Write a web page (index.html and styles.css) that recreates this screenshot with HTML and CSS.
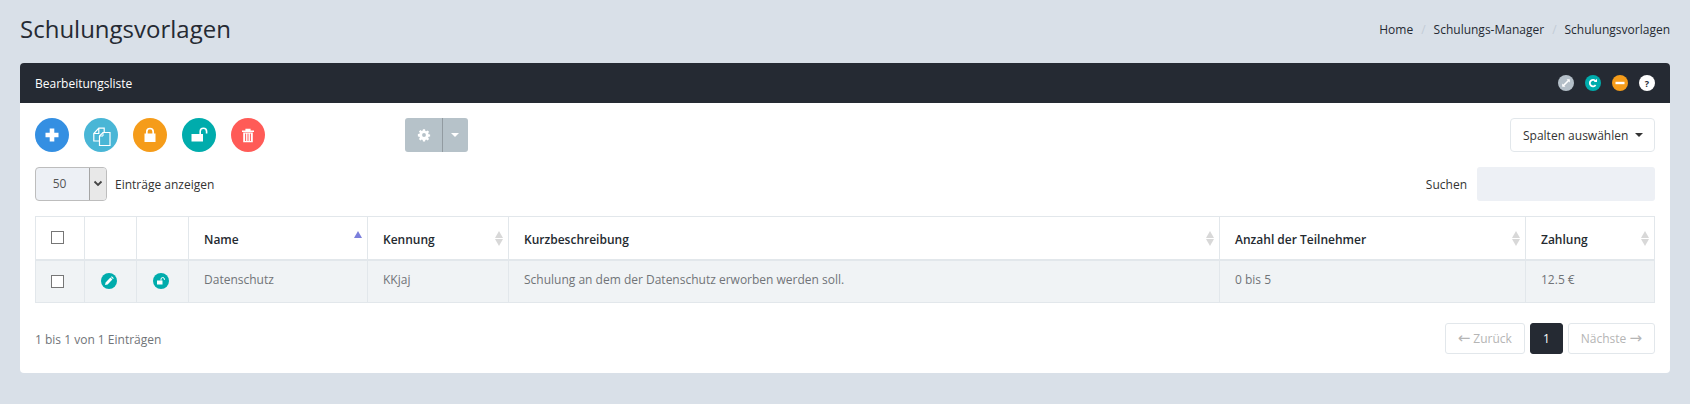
FILE: index.html
```html
<!DOCTYPE html>
<html lang="de">
<head>
  <meta charset="UTF-8">
  <title>Schulungsvorlagen</title>
  <link rel="stylesheet" href="styles.css">
</head>
<body>
  <div class="page-head">
    <h1>Schulungsvorlagen</h1>
    <ol class="breadcrumb">
      <li>Home</li>
      <li class="sep">/</li>
      <li>Schulungs-Manager</li>
      <li class="sep">/</li>
      <li>Schulungsvorlagen</li>
    </ol>
  </div>

  <div class="panel">
    <div class="panel-head">
      <span class="panel-title">Bearbeitungsliste</span>
      <div class="panel-tools">
        <span class="tool tool-grey">
          <svg viewBox="0 0 16 16" width="16" height="16"><path d="M5.500 10.500 L10.500 5.500" stroke="#fff" stroke-width="1.600"/><path d="M8.600 4.200h3.200v3.200zM7.400 11.800H4.200V8.600z" fill="#fff"/></svg>
        </span>
        <span class="tool tool-teal">
          <svg viewBox="0 0 16 16" width="16" height="16"><path d="M10.600 6.200a3.200 3.200 0 1 0 0 3.800" fill="none" stroke="#fff" stroke-width="1.800"/><path d="M8.800 6.900h3.200V3.700z" fill="#fff"/></svg>
        </span>
        <span class="tool tool-orange">
          <svg viewBox="0 0 16 16" width="16" height="16"><rect x="3.500" y="6.800" width="9" height="2.400" fill="#fff"/></svg>
        </span>
        <span class="tool tool-white">?</span>
      </div>
    </div>

    <div class="panel-body">
      <div class="toolbar">
        <div class="actions">
          <button class="round blue">
            <svg viewBox="0 0 34 34" width="34" height="34"><path d="M14.700 10.500h4.600v4.200h4.200v4.600h-4.200v4.200h-4.600v-4.200h-4.200v-4.600h4.200z" fill="#fff"/></svg>
          </button>
          <button class="round cyan">
            <svg viewBox="0 0 34 34" width="34" height="34"><path d="M15.500 23H9.800v-7.500l5-5.300h5.400V14M14.800 10.200v5.300H9.800" fill="none" stroke="#fff" stroke-width="1.200"/><path d="M19 14.500h7v13H15.500v-9.500z" fill="none" stroke="#fff" stroke-width="1.200"/><path d="M19 14.500V18h-3.500" fill="none" stroke="#fff" stroke-width="1"/></svg>
          </button>
          <button class="round orange">
            <svg viewBox="0 0 34 34" width="34" height="34"><rect x="11.500" y="15.500" width="11" height="8.500" fill="#fff"/><path d="M13.800 16v-2.300a3.200 3.200 0 0 1 6.400 0V16" fill="none" stroke="#fff" stroke-width="1.700"/></svg>
          </button>
          <button class="round teal">
            <svg viewBox="0 0 34 34" width="34" height="34"><rect x="9.500" y="16" width="11.500" height="7.500" fill="#fff"/><path d="M18.200 16v-2.500a3.200 3.200 0 0 1 6.400 0v2" fill="none" stroke="#fff" stroke-width="1.600"/></svg>
          </button>
          <button class="round red">
            <svg viewBox="0 0 34 34" width="34" height="34"><path d="M11 12.500h12v1.400H11zM14.400 12.500v-1.700h5.200v1.700" fill="#fff"/><path d="M12.200 14.500h9.600v9.700H12.200z" fill="#fff"/><path d="M14.600 15.600v7.400M17 15.600v7.400M19.400 15.600v7.400" stroke="#ff5b5b" stroke-width="1"/></svg>
          </button>
        </div>
        <div class="split-btn">
          <span class="split-main">
            <svg viewBox="0 0 16 16" width="14" height="14"><path d="M6.800 1.500h2.400l.3 1.800 1.100.5 1.500-1 1.700 1.600-1.100 1.500.5 1.100 1.800.3v2.400l-1.800.3-.5 1.100 1.100 1.500-1.700 1.700-1.500-1.100-1.100.5-.3 1.800H6.800l-.3-1.800-1.100-.5-1.500 1.100-1.700-1.700 1.100-1.500-.5-1.100-1.800-.3V6.800l1.800-.3.5-1.100-1.100-1.500 1.700-1.600 1.500 1 1.100-.5z M8 5.800a2.200 2.200 0 1 0 0 4.400 2.200 2.200 0 0 0 0-4.400z" fill="#fff" fill-rule="evenodd"/></svg>
          </span>
          <span class="split-caret"></span>
        </div>
        <button class="col-btn">Spalten auswählen<span class="caret"></span></button>
      </div>

      <div class="filters">
        <label class="length">
          <span class="fake-select">
            <span class="fake-value">50</span>
            <span class="fake-arrow">
              <svg viewBox="0 0 10 8" width="10" height="8"><path d="M1.500 1.500 5 5l3.500-3.500" fill="none" stroke="#444" stroke-width="1.800"/></svg>
            </span>
          </span>
          Einträge anzeigen
        </label>
        <label class="search">
          Suchen
          <span class="search-box"></span>
        </label>
      </div>

      <table class="data">
        <colgroup>
          <col class="c-check">
          <col class="c-icon">
          <col class="c-icon">
          <col class="c-name">
          <col class="c-id">
          <col class="c-desc">
          <col class="c-count">
          <col>
        </colgroup>
        <thead>
          <tr>
            <th class="center first"><span class="check"></span></th>
            <th></th>
            <th></th>
            <th class="sortable">Name<span class="sort-up"></span></th>
            <th class="sortable">Kennung<span class="sort"></span></th>
            <th class="sortable">Kurzbeschreibung<span class="sort"></span></th>
            <th class="sortable">Anzahl der Teilnehmer<span class="sort"></span></th>
            <th class="sortable">Zahlung<span class="sort"></span></th>
          </tr>
        </thead>
        <tbody>
          <tr>
            <td class="center first"><span class="check"></span></td>
            <td class="center">
              <span class="row-icon">
                <svg viewBox="0 0 16 16" width="16" height="16"><path d="M4 12l.6-2.600 4.800-4.800 2 2-4.800 4.800z M10 4l.8-.8 2 2-.8.8z" fill="#fff"/></svg>
              </span>
            </td>
            <td class="center">
              <span class="row-icon">
                <svg viewBox="0 0 16 16" width="16" height="16"><rect x="4" y="7.500" width="5.500" height="4" fill="#fff"/><path d="M8 7.500V6.200a1.700 1.700 0 0 1 3.400 0v.8" fill="none" stroke="#fff" stroke-width="1"/></svg>
              </span>
            </td>
            <td>Datenschutz</td>
            <td>KKjaj</td>
            <td>Schulung an dem der Datenschutz erworben werden soll.</td>
            <td>0 bis 5</td>
            <td>12.5 €</td>
          </tr>
        </tbody>
      </table>

      <div class="table-foot">
        <span class="info">1 bis 1 von 1 Einträgen</span>
        <div class="pager">
          <span class="page-btn off"><span class="arrow">←</span> Zurück</span>
          <span class="page-btn on">1</span>
          <span class="page-btn off">Nächste <span class="arrow">→</span></span>
        </div>
      </div>
    </div>
  </div>
</body>
</html>
```

FILE: styles.css
```css
* {
  box-sizing: border-box;
}
body {
  font-family: 'Open Sans', sans-serif;
  font-size: 12px;
  margin: 0;
  padding: 0 20px;
  background: #d9e0e8;
  color: #333;
}
.page-head {
  display: flex;
  justify-content: space-between;
  align-items: center;
  height: 63px;
}
h1 {
  font-size: 24px;
  font-weight: 400;
  color: #252a33;
  margin: 0;
  line-height: 33px;
  margin-bottom: 6px;
}
.breadcrumb {
  display: flex;
  gap: 8px;
  list-style: none;
  margin: 0 0 4px;
  padding: 0;
  color: #252a33;
}
.breadcrumb .sep {
  color: #c3ccd6;
}
.panel {
  background: #fff;
  border-radius: 4px;
  overflow: hidden;
}
.panel-head {
  display: flex;
  justify-content: space-between;
  align-items: center;
  height: 40px;
  padding: 0 15px;
  background: #252a33;
}
.panel-title {
  color: #fff;
}
.panel-tools {
  display: flex;
  gap: 11px;
}
.tool {
  display: flex;
  align-items: center;
  justify-content: center;
  width: 16px;
  height: 16px;
  border-radius: 50%;
}
.tool-grey { background: #b4bfc8; }
.tool-teal { background: #00acac; }
.tool-orange { background: #f59c1a; }
.tool-white {
  background: #fff;
  color: #252a33;
  font-size: 9px;
  font-weight: 700;
}
.panel-body {
  padding: 15px 15px 19px;
}
.toolbar {
  display: flex;
  align-items: center;
  height: 34px;
}
.actions {
  display: flex;
  gap: 15px;
  width: 370px;
}
.round {
  width: 34px;
  height: 34px;
  padding: 0;
  border: none;
  border-radius: 50%;
  display: block;
}
.round svg {
  display: block;
}
.blue { background: #348fe2; }
.cyan { background: #49b6d6; }
.orange { background: #f59c1a; }
.teal { background: #00acac; }
.red { background: #ff5b57; }
.split-btn {
  display: flex;
  height: 34px;
  width: 63px;
  background: #b6c2c9;
  border-radius: 3px;
}
.split-main {
  display: flex;
  align-items: center;
  justify-content: center;
  width: 38px;
  border-right: 1px solid #929ba1;
}
.split-caret {
  flex: 1;
  position: relative;
}
.split-caret::after {
  content: "";
  position: absolute;
  left: 8px;
  top: 15px;
  border: 4px solid transparent;
  border-top-color: #fff;
  border-bottom: 0;
}
.col-btn {
  margin-left: auto;
  display: flex;
  align-items: center;
  height: 34px;
  width: 145px;
  padding: 0 12px;
  font-family: inherit;
  font-size: 12px;
  white-space: nowrap;
  color: #333;
  background: #fff;
  border: 1px solid #e2e7eb;
  border-radius: 4px;
}
.caret {
  margin-left: 7px;
  border: 4px solid transparent;
  border-top-color: #333;
  border-bottom: 0;
}
.filters {
  display: flex;
  justify-content: space-between;
  align-items: center;
  margin-top: 15px;
  height: 34px;
}
.length, .search {
  display: flex;
  align-items: center;
}
.fake-select {
  display: flex;
  width: 72px;
  height: 34px;
  margin-right: 8px;
  background: #edf0f5;
  border: 1px solid #bdbdbd;
  border-radius: 4px;
  overflow: hidden;
}
.fake-value {
  width: 53px;
  padding-right: 6px;
  text-align: center;
  line-height: 32px;
  color: #555;
}
.fake-arrow {
  flex: 1;
  display: flex;
  align-items: center;
  justify-content: center;
  background: #e8e8e8;
  border-left: 1px solid #a5a5a5;
}
.search-box {
  display: block;
  width: 178px;
  height: 34px;
  margin-left: 10px;
  background: #edf0f5;
  border-radius: 3px;
}
.data {
  width: 100%;
  margin-top: 15px;
  border-collapse: collapse;
  table-layout: fixed;
}
.c-check { width: 49px; }
.c-icon { width: 52px; }
.c-name { width: 179px; }
.c-id { width: 141px; }
.c-desc { width: 711px; }
.c-count { width: 306px; }
.data th, .data td {
  border: 1px solid #e2e7eb;
  padding: 0 15px;
  text-align: left;
  position: relative;
}
.data th {
  height: 43px;
  padding-top: 4px;
  border-bottom-width: 2px;
  font-weight: 600;
  color: #242a30;
}
.data td {
  height: 43px;
  padding-bottom: 3px;
  background: #f0f3f5;
  color: #707478;
}
.data .center {
  padding: 0 4px 0 0;
  text-align: center;
}
.data .first {
  padding: 0 6px 0 0;
}
.check {
  display: block;
  width: 13px;
  height: 13px;
  margin: 0 auto;
  background: #fff;
  border: 1px solid #767676;
}
.row-icon {
  display: block;
  width: 16px;
  height: 16px;
  margin: 0 auto;
  background: #00acac;
  border-radius: 50%;
}
.row-icon svg {
  display: block;
}
.sort-up {
  position: absolute;
  right: 5px;
  top: 14px;
  border: 4px solid transparent;
  border-bottom: 7px solid #7b7fdc;
  border-top: 0;
}
.sort {
  position: absolute;
  right: 5px;
  top: 14px;
  width: 8px;
  height: 15px;
}
.sort::before, .sort::after {
  content: "";
  position: absolute;
  left: 0;
  border: 4px solid transparent;
}
.sort::before {
  top: 0;
  border-top: 0;
  border-bottom: 7px solid #d8d8d8;
}
.sort::after {
  bottom: 0;
  border-bottom: 0;
  border-top: 7px solid #d8d8d8;
}
.table-foot {
  display: flex;
  justify-content: space-between;
  align-items: center;
  margin-top: 20px;
  height: 31px;
}
.info {
  color: #707478;
  padding-top: 2px;
}
.pager {
  display: flex;
  gap: 5px;
}
.page-btn {
  display: block;
  height: 31px;
  line-height: 29px;
  padding: 0 12px;
  border: 1px solid #e2e7eb;
  border-radius: 3px;
}
.page-btn.off {
  color: #b5b5b5;
}
.page-btn.on {
  color: #fff;
  background: #252a33;
  border-color: #252a33;
}
.arrow {
  font-family: 'DejaVu Sans', sans-serif;
  font-size: 15px;
  line-height: 1;
}
```
